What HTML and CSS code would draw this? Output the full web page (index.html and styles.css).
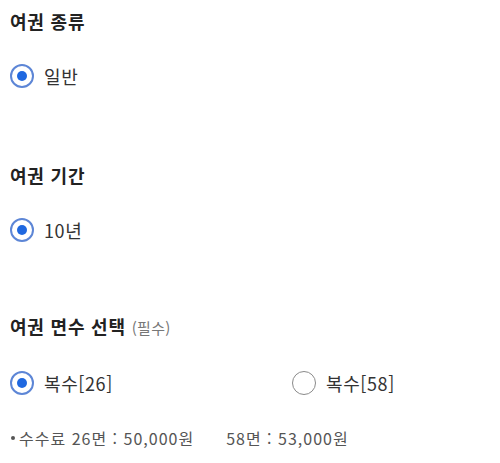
FILE: index.html
```html
<!DOCTYPE html>
<html lang="ko">
<head>
<meta charset="utf-8">
<link rel="stylesheet" href="styles.css">
</head>
<body>
<div class="page">
  <section class="group g1">
    <h2 class="title">여권 종류</h2>
    <div class="options">
      <label class="opt"><span class="radio on"></span><span class="lbl">일반</span></label>
    </div>
  </section>
  <section class="group g2">
    <h2 class="title">여권 기간</h2>
    <div class="options">
      <label class="opt"><span class="radio on"></span><span class="lbl">10년</span></label>
    </div>
  </section>
  <section class="group g3">
    <h2 class="title">여권 면수 선택 <span class="req">(필수)</span></h2>
    <div class="options two">
      <label class="opt"><span class="radio on"></span><span class="lbl">복수[26]</span></label>
      <label class="opt"><span class="radio"></span><span class="lbl">복수[58]</span></label>
    </div>
    <p class="note"><span class="dot"></span><span>수수료 26면 : 50,000원</span><span class="gap2">58면 : 53,000원</span></p>
  </section>
</div>
</body>
</html>
```
FILE: styles.css
```css
html, body {
  margin: 0;
  padding: 0;
  background: #ffffff;
}
body {
  font-family: "Noto Sans CJK KR", "Noto Sans", sans-serif;
  color: #333333;
}
.page {
  padding: 9px 0 0 10px;
  display: flex;
  flex-direction: column;
}
.group {
  display: flex;
  flex-direction: column;
}
.g1 { margin-bottom: 75px; }
.g2 { margin-bottom: 72px; }
.title {
  margin: 0 0 31px 0;
  font-size: 18px;
  line-height: 24px;
  font-weight: 700;
  color: #222222;
  letter-spacing: 0.8px;
}
.req {
  font-size: 15px;
  font-weight: 400;
  color: #777777;
  letter-spacing: 0.3px;
}
.options {
  display: grid;
  grid-template-columns: 282px 1fr;
  height: 24px;
}
.opt {
  display: flex;
  align-items: center;
  gap: 10px;
  height: 24px;
}
.radio {
  box-sizing: border-box;
  width: 24px;
  height: 24px;
  border-radius: 50%;
  border: 1.5px solid #8a8a8a;
  display: flex;
  align-items: center;
  justify-content: center;
  flex: none;
}
.radio.on {
  border: 2px solid #5d86d6;
}
.radio.on::after {
  content: "";
  width: 10px;
  height: 10px;
  border-radius: 50%;
  background: #1f68e0;
}
.lbl {
  font-size: 18px;
  line-height: 24px;
  color: #333333;
  letter-spacing: 0.6px;
}
.note {
  margin: 33px 0 0 0;
  display: flex;
  align-items: center;
  font-size: 16px;
  line-height: 20px;
  color: #555555;
  letter-spacing: 1px;
}
.dot {
  width: 4px;
  height: 4px;
  border-radius: 50%;
  background: #555555;
  margin: 0 4px 0 1px;
  flex: none;
}
.gap2 {
  margin-left: 32px;
}
```
